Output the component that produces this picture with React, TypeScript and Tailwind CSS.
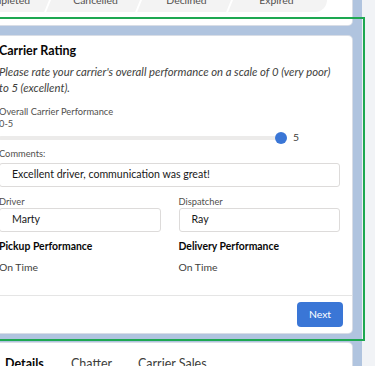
import React from "react";

const pathItems = [
  { t: "Completed", w: "w-[90px]" },
  { t: "Cancelled", w: "w-[91px]" },
  { t: "Declined", w: "w-[91px]" },
  { t: "Expired", w: "w-[95px]" },
];

function PathBar() {
  return (
    <div className="ml-[-39px] flex h-[24px] w-[367px] overflow-hidden rounded-r-full bg-[#f3f3f3]">
      {pathItems.map((p, i) => (
        <div
          key={p.t}
          className={`relative flex shrink-0 items-center justify-center pt-[2px] text-[10.4px] text-[#514f4d] ${p.w}`}
        >
          {i > 0 && (
            <span className="absolute bottom-0 left-[-1px] top-0 w-[2px] -skew-x-[22deg] bg-white" />
          )}
          <span className={i === 3 ? "pr-[6px]" : ""}>{p.t}</span>
        </div>
      ))}
    </div>
  );
}

function Field({ label, value }: { label: string; value: string }) {
  return (
    <div className="flex flex-col">
      <div className="text-[9.3px] leading-[12px] text-[#514f4d]">{label}</div>
      <div className="mt-[0.5px] flex h-[24px] items-center rounded-[3px] border border-[#dddbda] bg-white px-[12px] text-[10.6px] text-[#181818]">
        {value}
      </div>
    </div>
  );
}

export default function App() {
  return (
    <div
      className="relative h-[366px] w-[375px] overflow-hidden bg-[#f1f3f6]"
      style={{ fontFamily: "Lato, 'Open Sans', sans-serif" }}
    >
      <div className="ml-[-23px] mt-[-24px] flex h-[420px] w-[385px] flex-col bg-[#b0c4df] px-[10px]">
        {/* top card with path */}
        <div className="rounded-b-[4px] bg-white px-[12px] pb-[13px] pt-[12px] shadow-[0_0_0_1px_#d8dde6]">
          <PathBar />
        </div>

        {/* carrier rating card */}
        <div className="mt-[11px] flex flex-col rounded-[4px] bg-white shadow-[0_0_0_1px_#d8dde6]">
          <div className="flex h-[259px] flex-col px-[12px] pt-[7px]">
            <div className="text-[12.5px] font-bold leading-[16px] text-[#080707]">Carrier Rating</div>
            <p className="mt-[5px] whitespace-nowrap text-[11.3px] italic leading-[16px] text-[#3e3e3c]">
              Please rate your carrier's overall performance on a scale of 0 (very poor)
              <br />
              to 5 (excellent).
            </p>
            <div className="mt-[10px] text-[9.3px] leading-[12px] text-[#514f4d]">
              <div>Overall Carrier Performance</div>
              <div>0-5</div>
            </div>
            <div className="mt-[1.5px] flex h-[12px] items-center">
              <div className="h-[4px] w-[276px] rounded-l-full bg-[#ecebea]" />
              <div className="h-[12px] w-[12px] rounded-full bg-[#3a76d6]" />
              <div className="ml-[6px] text-[10.4px] text-[#3e3e3c]">5</div>
            </div>
            <div className="mt-[4px] text-[9.3px] leading-[12px] text-[#514f4d]">Comments:</div>
            <div className="mt-[3.5px] flex h-[24px] items-center rounded-[3px] border border-[#dddbda] px-[12px] text-[10.6px] text-[#181818]">
              Excellent driver, communication was great!
            </div>
            <div className="mt-[8.5px] grid grid-cols-2 gap-x-[18px]">
              <Field label="Driver" value="Marty" />
              <Field label="Dispatcher" value="Ray" />
            </div>
            <div className="mt-[7px] grid grid-cols-2 gap-x-[18px]">
              <div className="flex flex-col">
                <div className="text-[10.4px] font-bold leading-[14px] text-[#080707]">Pickup Performance</div>
                <div className="mt-[7px] text-[10.4px] leading-[14px] text-[#3e3e3c]">On Time</div>
              </div>
              <div className="flex flex-col">
                <div className="text-[10.4px] font-bold leading-[14px] text-[#080707]">Delivery Performance</div>
                <div className="mt-[7px] text-[10.4px] leading-[14px] text-[#3e3e3c]">On Time</div>
              </div>
            </div>
          </div>
          <div className="flex h-[38px] items-start justify-end border-t border-[#e5e5e5] pr-[9px] pt-[6px]">
            <button className="h-[25px] w-[46px] rounded-[4px] bg-[#3a76d6] text-[10.4px] text-white">Next</button>
          </div>
        </div>

        {/* tabs card */}
        <div className="mt-[10px] flex-1 rounded-t-[4px] bg-white px-[12px] pt-[13px] shadow-[0_0_0_1px_#d8dde6]">
          <div className="flex pl-[6px] text-[12.5px] leading-[16px]">
            <span className="w-[66px] font-bold text-[#080707]">Details</span>
            <span className="w-[67px] text-[#3e3e3c]">Chatter</span>
            <span className="text-[#3e3e3c]">Carrier Sales</span>
          </div>
        </div>
      </div>

      {/* selection outline */}
      <div className="pointer-events-none absolute left-[-10px] top-[17px] h-[324px] w-[375px] border-2 border-[#1da851]" />
    </div>
  );
}
